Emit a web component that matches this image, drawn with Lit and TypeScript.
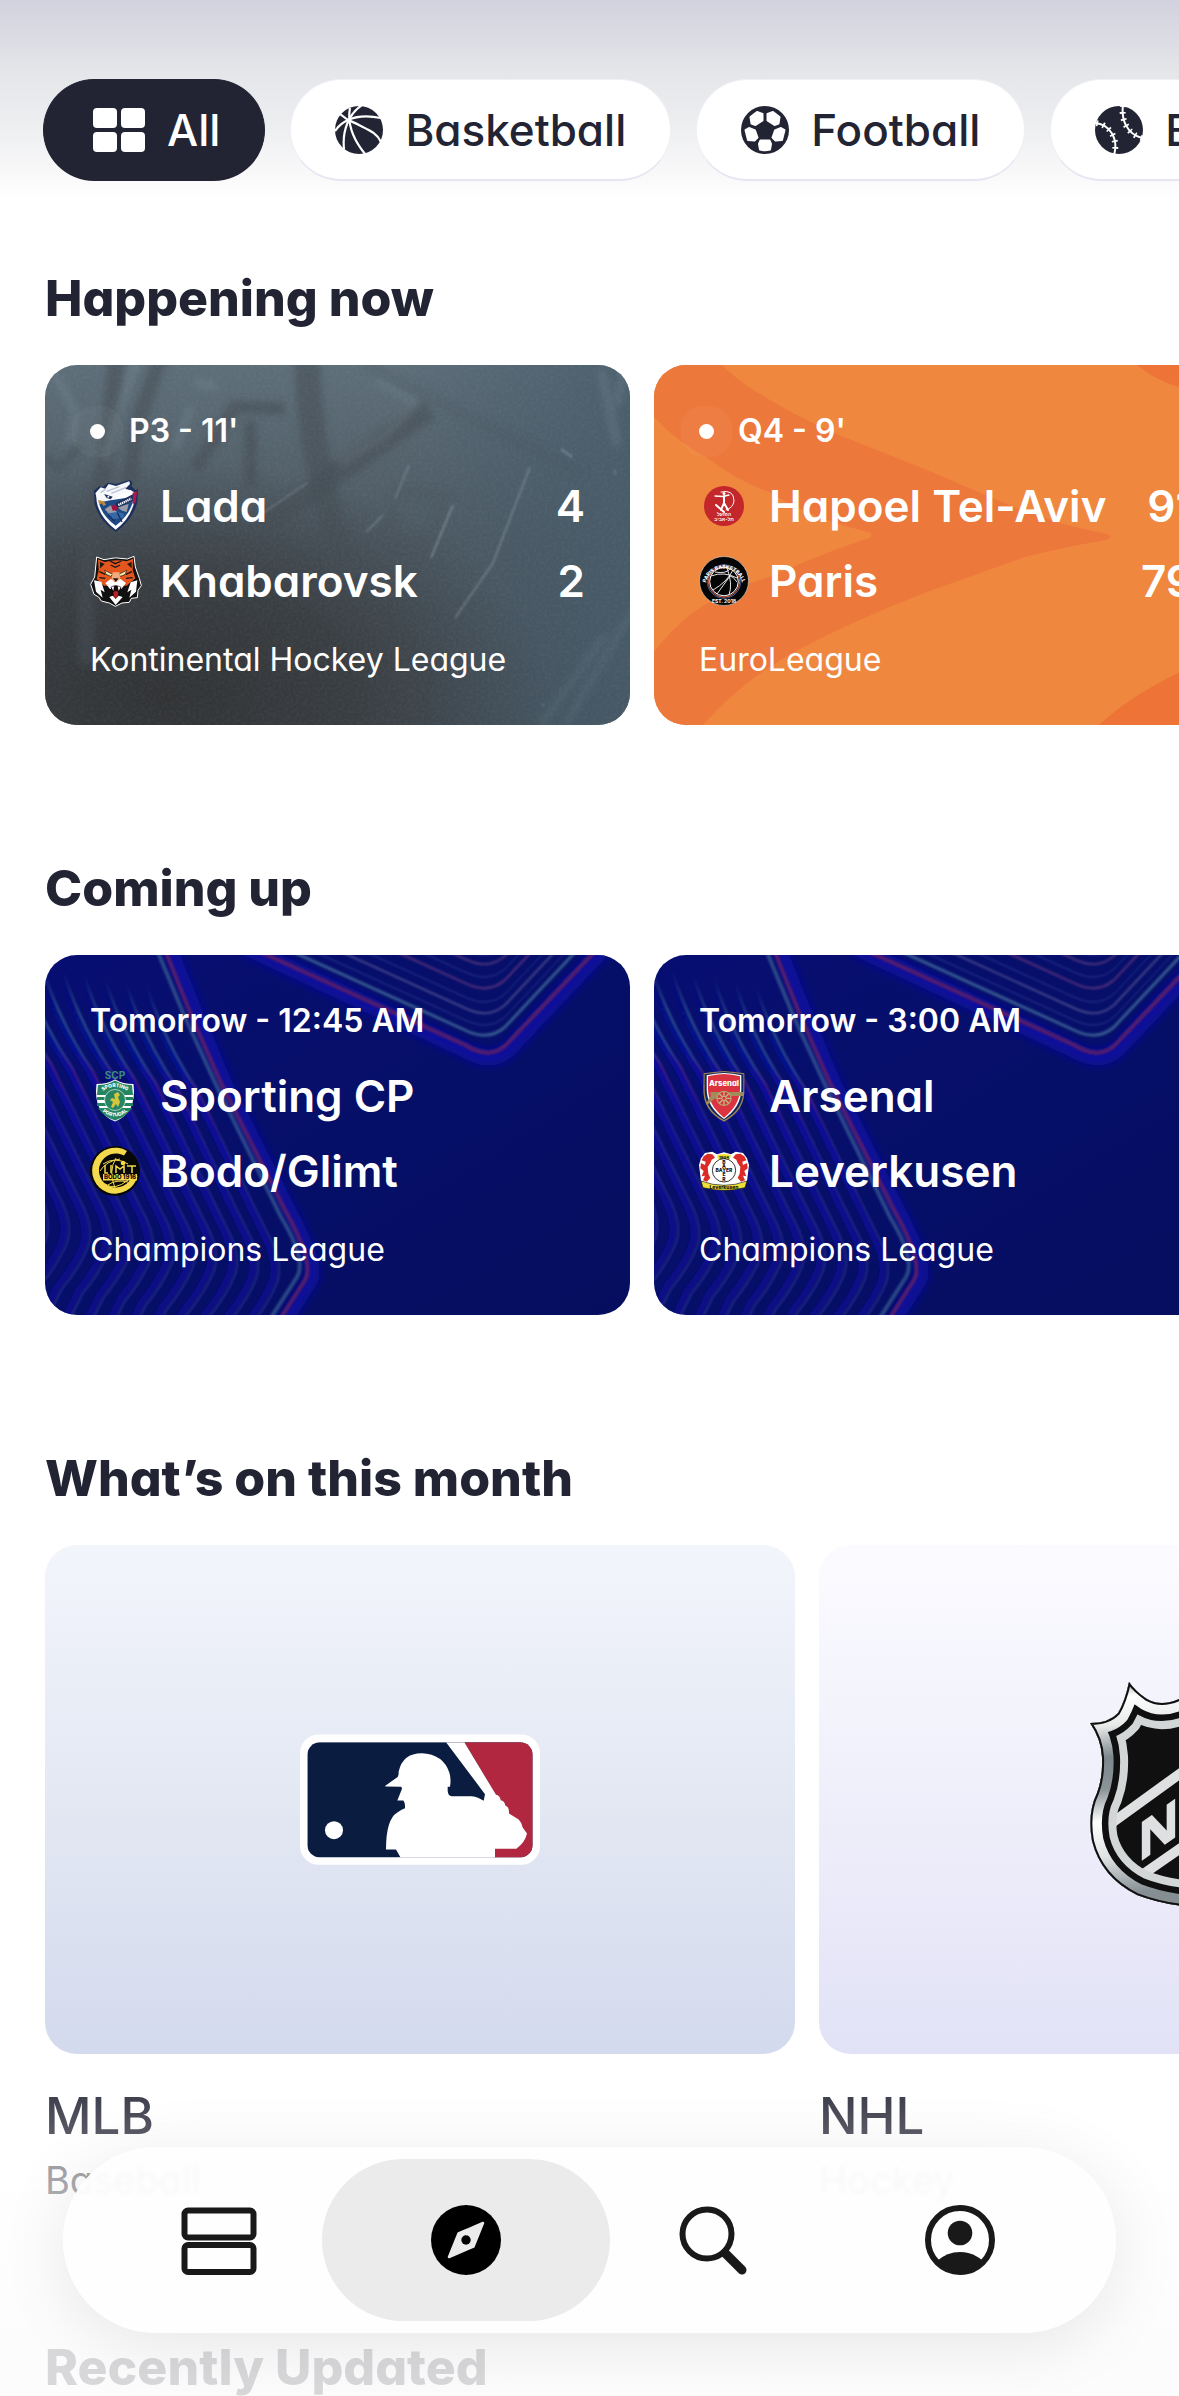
import { LitElement, html, svg, css, nothing, TemplateResult } from "lit";
import { customElement, property, state } from "lit/decorators.js";
import { classMap } from "lit/directives/class-map.js";

/* ---------- sport icons ---------- */

const gridIcon = html`<svg width="52" height="44" viewBox="0 0 52 44" fill="currentColor" aria-hidden="true">
  <rect width="24" height="20" rx="4" /><rect x="28" width="24" height="20" rx="4" />
  <rect y="24" width="24" height="20" rx="4" /><rect x="28" y="24" width="24" height="20" rx="4" />
</svg>`;

const basketballIcon = html`<svg width="48" height="48" viewBox="0 0 48 48" aria-hidden="true">
  <circle cx="24" cy="24" r="24" fill="currentColor" />
  <g fill="none" stroke="#fff" stroke-width="2.2">
    <path d="M0 25C7 15 20 7 46 12" /><path d="M15 2C12 18 17 32 30 48" />
    <path d="M27 -1C14 8 7 24 9 43" /><path d="M5 8C14 16 17 15 24 19C34 24 42 27 46 36" />
  </g>
</svg>`;

const footballIcon = html`<svg width="48" height="48" viewBox="0 0 48 48" aria-hidden="true">
  <circle cx="24" cy="24" r="24" fill="currentColor" />
  <g fill="#fff" stroke="#fff" stroke-width="2" stroke-linejoin="round">
    <path d="M9.500 11L16 6L21.500 8V14.500L14.500 19L10.500 17.500Z" />
    <path d="M38.500 11L32 6L26.500 8V14.500L33.500 19L37.500 17.500Z" />
    <path d="M4.500 24L8 22L14 24.500L16.500 31.500L13.500 34.500L7 34Z" />
    <path d="M43.500 24L40 22L34 24.500L31.500 31.500L34.500 34.500L41 34Z" />
    <path d="M19.500 34.500H28.500L30 38L29 43.500Q24 45 19 43.500L18 38Z" />
  </g>
</svg>`;

const baseballIcon = html`<svg width="48" height="48" viewBox="0 0 48 48" aria-hidden="true">
  <circle cx="24" cy="24" r="24" fill="currentColor" />
  <g fill="none" stroke="#fff">
    <path d="M0 17C14 18 24 32 19 49" stroke-width="2" />
    <path d="M28 -1C26 14 32 28 47 32" stroke-width="2" />
    <path d="M0 17C14 18 24 32 19 49" stroke-width="6" stroke-dasharray="1.700 5" stroke-dashoffset="-8" />
    <path d="M28 -1C26 14 32 28 47 32" stroke-width="6" stroke-dasharray="1.700 5" stroke-dashoffset="-7" />
  </g>
</svg>`;

/* ---------- team crests ---------- */

const lada = html`<svg class="crest" viewBox="30 57 150 150" aria-hidden="true">
  <path d="M42 86L58 72L68 76L84 62L108 66L150 54L158 64L154 72L166 84L174 82L172 120Q160 172 107 210Q56 174 44 126Z" fill="#1d2f5c" />
  <path d="M48 92L150 84L166 92Q164 160 107 203Q58 166 50 118Z" fill="#fff" />
  <path d="M56 120L162 104Q154 156 107 191Q66 162 56 120Z" fill="#1f4a86" />
  <path d="M80 150L104 147L132 155L130 168L94 172Z" fill="#3669a8" />
  <path d="M84 158L104 178M112 152L126 180" stroke="#14305f" stroke-width="4" />
  <path d="M74 142L92 130L110 150L86 154ZM112 136L146 126L140 150L126 146Z" fill="#9a9ca5" />
  <path d="M94 132L112 126L112 144L98 146Z" fill="#a3123f" />
  <path d="M158 92L171 88L167 122L158 126Z" fill="#b2164a" />
  <path d="M106 124L160 96L157 116L112 138Z" fill="#1d2f5c" />
  <path d="M115 129L154 110" stroke="#fff" stroke-width="7" stroke-dasharray="4 2" />
  <path d="M46 94L62 76L76 80L86 66L108 72L148 58L150 66L136 80L156 86L120 98L104 112L92 108L78 118L54 116Z" fill="#f6f8fc" />
  <path d="M62 92L76 82M80 88L118 74M94 94L138 76" stroke="#bac3d3" stroke-width="4" />
  <path d="M72 96L98 104L92 112L80 108Z" fill="#1d2f5c" /><circle cx="85" cy="104" r="3" fill="#fff" />
  <path d="M54 114L72 118L78 128L70 132L66 124L58 128Z" fill="#c08a3e" />
</svg>`;

const khabarovsk = html`<svg class="crest" viewBox="30 283 150 150" aria-hidden="true">
  <path d="M50 286L72 294Q106 284 142 292L162 284L166 316L178 350L184 372L174 386L172 408L154 410L148 422L126 424L106 434L88 424L64 418L56 406L42 398L32 368L44 346Z" fill="#111" stroke="#fff" stroke-width="3" />
  <path d="M54 293L74 301Q106 292 140 299L159 291L158 326L166 350L140 372H72L50 352L56 326Z" fill="#e4561e" />
  <path d="M60 300L74 307L60 320ZM155 300L141 307L155 320Z" fill="#231a16" />
  <path d="M90 298L106 306L124 298M92 310L106 317L120 310M58 330L76 338M156 330L138 338M58 348L76 350M158 348L138 350" stroke="#151515" stroke-width="4" fill="none" />
  <path d="M74 326L98 338L92 344L78 338ZM140 326L116 338L122 344L136 338Z" fill="#f8edb0" stroke="#111" stroke-width="2" />
  <path d="M98 332H118L122 358H94Z" fill="#f0ab7c" />
  <path d="M92 352L106 362L122 352L138 364L124 382H90L76 364Z" fill="#fff" />
  <path d="M98 350H116L108 360Z" fill="#2b1512" />
  <path d="M42 356L64 360L74 392L62 384L68 408L48 390ZM172 356L152 362L142 392L154 384L148 408L168 390Z" fill="#fff" />
  <path d="M92 376Q106 366 124 376L118 408H96Z" fill="#16090a" />
  <path d="M100 392Q107 384 115 392L112 408H102Z" fill="#b82029" />
  <path d="M94 376L100 388L102 374M122 376L116 388L113 374" fill="#fff" />
  <path d="M88 406L98 402L107 412L116 402L128 406L107 430Z" fill="#fff" />
</svg>`;

const hapoel = html`<svg class="crest" viewBox="0 0 50 50" aria-hidden="true">
  <circle cx="25" cy="25" r="20" fill="#c3262b" />
  <g fill="none" stroke="#fff" stroke-linecap="round">
    <path d="M22 11Q35 8 35 20Q34 27 27 29" stroke-width="1" /><path d="M16 15L24 15.500L30 14" stroke-width="1.300" />
    <path d="M25 15V22L29 29M25 22L22 29M17 24L25 31" stroke-width="2" />
  </g>
  <circle cx="25" cy="12.500" r="1.500" fill="#fff" />
  <text x="25" y="35" text-anchor="middle" class="tiny" fill="#fff">הפועל</text>
  <text x="25" y="40" text-anchor="middle" class="tiny" fill="#fff">תל-אביב</text>
</svg>`;

const paris = html`<svg class="crest" viewBox="0 0 50 50" aria-hidden="true">
  <circle cx="25" cy="25" r="24.500" fill="#050505" stroke="#d8d8d8" stroke-width=".6" />
  <circle cx="25" cy="25.500" r="16.800" fill="none" stroke="#39558e" stroke-width="1" />
  <circle cx="25" cy="25.500" r="15.700" fill="none" stroke="#de6450" stroke-width="1" />
  <circle cx="25" cy="25.500" r="14.300" fill="#050505" stroke="#fff" stroke-width="1" />
  <g fill="none" stroke="#fff" stroke-width=".9">
    <path d="M12 20Q25 15 38 22M14 34Q28 26 34 14M18 38L31 20M30 39Q34 28 28 12M16 16Q27 18 31 13M38 26Q34 20 31 20" />
  </g>
  <path id="paris-top" d="M6.500 28A18.800 18.800 0 0 1 43.500 28" fill="none" />
  <text class="ring" fill="#fff"><textPath href="#paris-top" startOffset="50%" text-anchor="middle">PARIS BASKETBALL</textPath></text>
  <text x="25" y="47" text-anchor="middle" class="tiny" fill="#fff">EST. 2018</text>
</svg>`;

const sporting = html`<svg class="crest" viewBox="0 0 50 50" aria-hidden="true">
  <text x="25" y="8" text-anchor="middle" class="scp" fill="#3a8f79">SCP</text>
  <path d="M6.500 13Q17 13 25 8.500Q33 13 43.500 13Q47 42 25 50.500Q3 42 6.500 13Z" fill="#fff" />
  <path d="M8 14Q17 14 25 9.500Q33 14 42 14L43 24H7ZM8 37H42Q36 46 25 49.500Q14 46 8 37Z" fill="#258560" />
  <path d="M7 26H43V29H7ZM7 32H43V35H7Z" fill="#258560" />
  <circle cx="25" cy="29" r="10.500" fill="#258560" stroke="#fff" stroke-width=".6" />
  <path d="M21 36L23 31L20 29L22 27L25 28L24 23L28 21L30 24L28 26L30 31L28 36L26 33L23 37Z" fill="#d6c63c" />
  <path id="scp-top" d="M10 22Q25 10 40 22" fill="none" /><path id="scp-low" d="M10 38Q25 53 40 38" fill="none" />
  <text class="ring" fill="#fff"><textPath href="#scp-top" startOffset="50%" text-anchor="middle">SPORTING</textPath></text>
  <text class="ring" fill="#fff"><textPath href="#scp-low" startOffset="50%" text-anchor="middle">PORTUGAL</textPath></text>
</svg>`;

const bodo = html`<svg class="crest" viewBox="0 0 50 50" aria-hidden="true">
  <circle cx="25" cy="25" r="25" fill="#080806" />
  <path d="M37 5A23 23 0 1 0 47.500 30L42 30A17 17 0 1 1 34 9.500Z" fill="#f4d94c" />
  <g fill="none" stroke="#f4d94c" stroke-width="1">
    <path d="M13 18Q25 10 38 18M10 25Q16 15 30 13M15 38Q25 45 38 34M18 39Q26 33 38 36M26 12Q18 25 25 42" />
  </g>
  <path d="M15 19V27H18M21 19V27M26 27V20L30 23L34 20V27M37 20H46M42 20V27" fill="none" stroke="#f4d94c" stroke-width="1.500" />
  <circle cx="33" cy="17" r="2.300" fill="#f4d94c" />
  <rect x="13" y="28" width="34" height="6.500" fill="#f4d94c" />
  <text x="30" y="33.200" text-anchor="middle" class="bodo" fill="#080806">BODO 1916</text>
</svg>`;

const arsenal = html`<svg class="crest" viewBox="58 57 150 150" aria-hidden="true">
  <path d="M72 64Q102 60 133 57Q164 60 194 64V108Q198 176 133 209Q68 176 71 108Z" fill="#9c8453" />
  <path d="M75 67Q104 63 133 60Q162 63 191 67V110Q192 172 133 204Q74 172 75 110Z" fill="#10275f" />
  <path d="M81 70Q106 64 133 63Q160 64 185 70V112Q184 166 133 201Q82 166 81 112Z" fill="#fff" />
  <path d="M85 73Q106 67 133 66Q160 67 181 73V112Q180 160 133 197Q86 160 85 112Z" fill="#dc3340" />
  <path d="M92 120H192V132H156L150 140H104L82 160L80 152L94 132Z" fill="#a38c5b" />
  <circle cx="133" cy="139" r="21" fill="#cf3a40" stroke="#b89f6a" stroke-width="4" />
  <path d="M133 119V160M113 139H153M119 125L147 154M147 125L119 154" stroke="#c9b37f" stroke-width="4" />
  <circle cx="133" cy="139" r="6" fill="#df2b38" stroke="#c9b37f" stroke-width="3" />
  <text x="133" y="103" text-anchor="middle" class="arsenal" fill="#fff">Arsenal</text>
</svg>`;

const leverkusen = html`<svg class="crest" viewBox="58 283 150 150" aria-hidden="true">
  <path d="M76 304L98 300L112 308L133 302L154 308L168 300L190 304L202 320L208 340L202 388L188 406Q133 424 78 406L64 388L58 340L64 320Z" fill="#fff" />
  <g fill="#dc2b27">
    <path d="M72 314L84 306L98 308L106 318L96 324L92 334L84 346L86 366L92 378L82 390L70 386L76 372L66 374L72 358L62 350L64 334L76 340L78 330L66 326Z" />
    <path d="M194 314L182 306L168 308L160 318L170 324L174 334L182 346L180 366L174 378L184 390L196 386L190 372L200 374L194 358L204 350L202 334L190 340L188 330L200 326Z" />
  </g>
  <path d="M112 310Q133 304 154 310L150 324Q133 318 116 324Z" fill="#f2df35" />
  <circle cx="133" cy="356" r="35" fill="#fff" stroke="#111" stroke-width="2.500" />
  <path d="M64 388Q133 414 202 388L196 408Q133 424 70 408Z" fill="#f2df35" stroke="#111" stroke-width="2" />
  <text x="133" y="321" text-anchor="middle" class="lev-small" fill="#111">1904</text>
  <text x="133" y="362" text-anchor="middle" class="lev" fill="#111">BAYER</text>
  <text x="133" y="337" text-anchor="middle" class="lev" fill="#111">B</text>
  <text x="133" y="349" text-anchor="middle" class="lev" fill="#111">A</text>
  <text x="133" y="374" text-anchor="middle" class="lev" fill="#111">E</text>
  <text x="133" y="387" text-anchor="middle" class="lev" fill="#111">R</text>
  <text x="133" y="411" text-anchor="middle" class="lev" fill="#111">Leverkusen</text>
</svg>`;

/* ---------- card artwork ---------- */

const iceArt = html`<svg class="art" viewBox="0 0 585 360" preserveAspectRatio="xMidYMid slice" aria-hidden="true">
  <defs>
    <linearGradient id="ice" x1="0" y1="0" x2="0" y2="1"><stop offset="0" stop-color="#5e6e79" /><stop offset=".5" stop-color="#4c5861" /><stop offset="1" stop-color="#434e57" /></linearGradient>
    <radialGradient id="dark" cx=".2" cy=".92" r=".66"><stop offset="0" stop-color="#313335" /><stop offset=".5" stop-color="#36393c" stop-opacity=".8" /><stop offset="1" stop-color="#3a4046" stop-opacity="0" /></radialGradient>
    <linearGradient id="side" x1="0" x2="1"><stop offset=".6" stop-color="#465b6a" stop-opacity="0" /><stop offset="1" stop-color="#465b6a" stop-opacity=".8" /></linearGradient>
    <filter id="b3" x="-20%" y="-20%" width="140%" height="140%"><feGaussianBlur stdDeviation="3.500" /></filter>
    <filter id="b1"><feGaussianBlur stdDeviation=".8" /></filter>
    <filter id="grain"><feTurbulence type="fractalNoise" baseFrequency=".35" numOctaves="2" seed="4" /><feColorMatrix values="0 0 0 0 1  0 0 0 0 1  0 0 0 0 1  .5 0 0 0 -.18" /></filter>
  </defs>
  <rect width="585" height="360" fill="url(#ice)" />
  <rect width="585" height="360" fill="url(#side)" />
  <rect width="585" height="360" fill="url(#dark)" />
  <g filter="url(#b3)" fill="none" stroke="#434c53" stroke-opacity=".55">
    <path d="M262 -10Q264 60 276 110L298 210" stroke-width="26" />
    <path d="M384 44L290 110L215 164" stroke-width="22" />
    <path d="M116 -10L92 60L84 118" stroke-width="15" />
    <path d="M72 -10L60 100Q36 180 42 300" stroke-width="17" />
    <path d="M150 104L190 42L240 44M205 56L206 122" stroke-width="13" />
    <path d="M0 92L14 104L36 80" stroke-width="7" />
    <path d="M350 180L384 176L402 130L352 126L344 170" stroke-width="9" stroke-opacity=".25" />
    <path d="M320 0L540 110" stroke-width="12" stroke-opacity=".2" />
  </g>
  <g filter="url(#b3)" fill="none" stroke="#8294a0" stroke-opacity=".3">
    <path d="M92 -6L72 50L60 96M10 10L30 46L24 80M146 42L130 84M150 18L172 22" stroke-width="7" />
    <path d="M330 15L372 38L340 70L296 98" stroke-width="6" stroke-opacity=".25" />
    <path d="M556 4L572 80M580 0L572 40" stroke-width="8" stroke-opacity=".25" />
    <path d="M585 250L520 360M560 270L496 360" stroke-width="5" stroke-opacity=".2" />
  </g>
  <g filter="url(#b1)" fill="none" stroke="#9fb0ba" stroke-opacity=".5" stroke-width="1.800">
    <path d="M364 100L350 134M338 150L321 167" stroke-opacity=".35" /><path d="M408 140L386 193" />
    <path d="M485 102L448 198L410 253" stroke-opacity=".4" /><path d="M516 84L527 92" />
    <path d="M212 152L262 118M570 104V110M498 338V342" stroke-opacity=".3" />
  </g>
  <rect width="585" height="360" filter="url(#grain)" opacity=".18" />
</svg>`;

const orangeArt = html`<svg class="art" viewBox="0 0 585 360" preserveAspectRatio="xMidYMid slice" aria-hidden="true">
  <rect width="585" height="360" fill="#ef873e" />
  <path d="M0 0H68Q80 12 95 22Q135 48 185 70L273 105L343 135Q395 158 453 169Q460 172 452 175Q410 182 371 192L273 227Q200 255 140 287Q85 318 49 360H0V287Q16 266 38 248Q72 224 115 212Q180 184 215 173Q220 170 215 167Q160 155 115 127Q84 116 56 95Q22 76 0 52Z" fill="#ed783b" />
  <path d="M483 0Q500 14 524 22L585 44V0Z" fill="#ed7336" />
  <path d="M445 360Q475 332 524 308L585 282V360Z" fill="#ed7336" />
</svg>`;

const stripes = [...Array(14).keys()].map((i) => i + 1);
const chevrons = [
  { dy: 12, w: 3, c: "#36588f" }, { dy: 22, w: 1, c: "#2c3a90" }, { dy: 34, w: 2, c: "#434488" },
  { dy: 45, w: 1, c: "#2c3a90" }, { dy: 59, w: 2.4, c: "#4a2c78" }, { dy: 70, w: 1, c: "#2c3a90" },
  { dy: 83, w: 2, c: "#483278" }, { dy: 92, w: 1, c: "#2c3a90" },
];

const starArt = html`<svg class="art" viewBox="0 0 585 360" preserveAspectRatio="xMidYMid slice" aria-hidden="true">
  <defs>
    <linearGradient id="night" x1="0" y1="0" x2="1" y2="1"><stop offset="0" stop-color="#070e72" /><stop offset=".5" stop-color="#060f68" /><stop offset="1" stop-color="#050e5e" /></linearGradient>
    <linearGradient id="line" gradientUnits="userSpaceOnUse" x1="0" y1="0" x2="0" y2="360">
      <stop offset=".1" stop-color="#3f7398" stop-opacity="0" /><stop offset=".22" stop-color="#3f7398" stop-opacity=".8" /><stop offset=".34" stop-color="#31508f" /><stop offset=".4" stop-color="#501e78" /><stop offset=".52" stop-color="#26248a" /><stop offset="1" stop-color="#232f90" />
    </linearGradient>
    <linearGradient id="band" gradientUnits="userSpaceOnUse" x1="0" y1="0" x2="0" y2="360"><stop offset=".12" stop-color="#0a12a0" stop-opacity="0" /><stop offset=".4" stop-color="#08109a" /><stop offset="1" stop-color="#081088" /></linearGradient>
    <filter id="s4" x="-20%" y="-20%" width="140%" height="140%"><feGaussianBlur stdDeviation="4.500" /></filter>
    <filter id="s1" x="-20%" y="-20%" width="140%" height="140%"><feGaussianBlur stdDeviation="1" /></filter>
  </defs>
  <rect width="585" height="360" fill="url(#night)" />
  <g fill="none" filter="url(#s1)">
    ${stripes.map((i) => svg`<g transform=${`translate(${-21 * i} ${-4 * i})`}>
      <path d="M105 -20Q122 70 170 140L240 285Q254 312 248 330Q240 350 222 372L190 440" stroke="url(#band)" stroke-width="6" />
      <path d="M109 -20Q126 70 174 140L245 285Q260 312 253 332Q245 352 227 374L194 440" stroke="url(#line)" stroke-width="1.600" />
    </g>`)}
  </g>
  <g fill="none">
    <path d="M124 -10L152 60L180 128L244 255Q274 312 266 325L238 370" stroke="#0810a8" stroke-opacity=".85" stroke-width="14" filter="url(#s4)" />
    <g filter="url(#s1)">
      <path d="M110 -10L139 60L172 132L236 262Q262 305 252 322L220 372" stroke="#2b4886" stroke-width="4" />
      <path d="M118 -10L146 60L176 128L240 255Q270 308 260 325L230 372" stroke="#541f6c" stroke-width="4" />
    </g>
  </g>
  <g fill="none">
    <path d="M200 -8L420 95Q446 110 464 94L562 -10" stroke="#0810a8" stroke-opacity=".85" stroke-width="16" filter="url(#s4)" />
    <g filter="url(#s1)">
      <path d="M200 -10L420 90Q446 106 462 89L556 -10" stroke="#541f6c" stroke-width="4" />
      ${chevrons.map(({ dy, w, c }) => svg`<path transform=${`translate(0 ${-dy})`} d="M160 -31L422 88Q444 98 460 84L580 -44" stroke=${c} stroke-width=${w} />`)}
    </g>
  </g>
</svg>`;

/* ---------- league logos ---------- */

const mlbLogo = html`<svg width="240" height="131" viewBox="60 70 720 392" role="img" aria-label="MLB">
  <defs><clipPath id="mlb"><rect x="82" y="94" width="676" height="346" rx="38" /></clipPath></defs>
  <rect x="60" y="71" width="720" height="391" rx="56" fill="#fff" />
  <g clip-path="url(#mlb)">
    <rect x="82" y="94" width="676" height="346" fill="#0a1d40" />
    <path d="M553 94H758V440H640V240Z" fill="#b0273f" />
    <path d="M316 225L352 199Q356 196 356 182Q368 127 425 127Q490 130 508 185Q514 205 510 228H503V240Q504 256 515 256H575Q595 258 611 270L615 250L498 94H553L648 252Q660 254 662 268Q674 270 676 284Q688 288 687 308L716 326Q726 336 728 350L741 368Q735 395 709 414H645V441H362L348 416H318Q318 325 352 305Q366 295 375 292Q376 275 370 269H352L366 234L364 228L316 227Z" fill="#fff" />
    <circle cx="162" cy="358" r="27" fill="#fff" />
  </g>
</svg>`;

const shield = "M105 1Q98 16 90 18Q72 26 58 18Q46 10 40 1Q36 20 29 32Q20 42 1 42Q12 58 13 76Q14 96 8 112Q-2 132 3 160Q12 196 48 214Q74 224 105 226Q136 224 162 214Q198 196 207 160Q212 132 202 112Q196 96 197 76Q198 58 209 42Q190 42 181 32Q174 20 170 1Q164 10 152 18Q138 26 120 18Q112 16 105 1Z";

const nhlLogo = html`<svg width="210" height="238" viewBox="0 0 210 238" role="img" aria-label="NHL">
  <defs>
    <clipPath id="nhl"><path d=${shield} /></clipPath>
    <linearGradient id="steel" x1="0" y1="0" x2=".1" y2="1"><stop offset="0" stop-color="#8f979b" /><stop offset=".08" stop-color="#fff" /><stop offset=".2" stop-color="#e8eaea" /><stop offset=".34" stop-color="#7d878c" /><stop offset=".48" stop-color="#8b9498" /><stop offset=".62" stop-color="#fff" /><stop offset=".78" stop-color="#dfe2e3" /><stop offset=".95" stop-color="#858e92" /></linearGradient>
  </defs>
  <g clip-path="url(#nhl)">
    <path d=${shield} fill="#101010" />
    <path d="M20 144L190 21M50 196L200 92" stroke="#dfe0e1" stroke-width="10" />
    <g fill="none">
      <path d=${shield} stroke="#d3d6d7" stroke-width="52" />
      <path d=${shield} stroke="#101010" stroke-width="36" />
      <path d=${shield} stroke="url(#steel)" stroke-width="23" />
      <path d=${shield} stroke="#101010" stroke-width="4" />
    </g>
    <text transform="translate(50 181) skewY(-35)" class="nhl" fill="#dfe0e1" stroke="#dfe0e1" stroke-width="1.500">NHL</text>
  </g>
</svg>`;

/* ---------- tab bar icons ---------- */

const feedIcon = html`<svg width="80" height="80" viewBox="0 0 80 80" fill="none" stroke="#191919" stroke-width="6" aria-hidden="true">
  <rect x="5.500" y="10.500" width="69" height="27" rx="3.500" /><rect x="5.500" y="45" width="69" height="27" rx="3.500" />
</svg>`;
const compassIcon = html`<svg width="80" height="80" viewBox="0 0 80 80" aria-hidden="true">
  <circle cx="40" cy="40" r="35" fill="#000" />
  <path d="M57 23L47.500 46.500L23 57L32.500 33.500Z" fill="#ebebeb" stroke="#ebebeb" stroke-width="2.500" stroke-linejoin="round" />
  <circle cx="40" cy="40" r="4.700" fill="#000" />
</svg>`;
const searchIcon = html`<svg width="80" height="80" viewBox="0 0 80 80" fill="none" stroke="#191919" aria-hidden="true">
  <circle cx="34" cy="34" r="24.500" stroke-width="6" /><path d="M52 53L69 70" stroke-width="9" stroke-linecap="round" />
</svg>`;
const profileIcon = html`<svg width="80" height="80" viewBox="0 0 80 80" aria-hidden="true">
  <circle cx="40" cy="40" r="32" fill="none" stroke="#191919" stroke-width="6" />
  <circle cx="40" cy="33" r="12.300" fill="#191919" />
  <path d="M17 61Q27 52 40 52T63 61A32 32 0 0 1 17 61Z" fill="#191919" />
</svg>`;

/* ---------- data ---------- */

interface Team { name: string; crest: TemplateResult; score?: number }
interface Match { status: string; live?: boolean; league: string; art: TemplateResult; teams: Team[] }
interface League { name: string; sport: string; tone: string; logo: TemplateResult }

const sports = [
  { name: "All", icon: gridIcon },
  { name: "Basketball", icon: basketballIcon },
  { name: "Football", icon: footballIcon },
  { name: "Baseball", icon: baseballIcon },
];

const liveMatches: Match[] = [
  { status: "P3 - 11'", live: true, league: "Kontinental Hockey League", art: iceArt,
    teams: [{ name: "Lada", crest: lada, score: 4 }, { name: "Khabarovsk", crest: khabarovsk, score: 2 }] },
  { status: "Q4 - 9'", live: true, league: "EuroLeague", art: orangeArt,
    teams: [{ name: "Hapoel Tel-Aviv", crest: hapoel, score: 91 }, { name: "Paris", crest: paris, score: 79 }] },
];

const nextMatches: Match[] = [
  { status: "Tomorrow - 12:45 AM", league: "Champions League", art: starArt,
    teams: [{ name: "Sporting CP", crest: sporting }, { name: "Bodo/Glimt", crest: bodo }] },
  { status: "Tomorrow - 3:00 AM", league: "Champions League", art: starArt,
    teams: [{ name: "Arsenal", crest: arsenal }, { name: "Leverkusen", crest: leverkusen }] },
];

const leagues: League[] = [
  { name: "MLB", sport: "Baseball", tone: "blue", logo: mlbLogo },
  { name: "NHL", sport: "Hockey", tone: "violet", logo: nhlLogo },
];

const tabs = [
  { name: "Feed", icon: feedIcon },
  { name: "Discover", icon: compassIcon },
  { name: "Search", icon: searchIcon },
  { name: "Profile", icon: profileIcon },
];

/* ---------- elements ---------- */

@customElement("match-card")
class MatchCard extends LitElement {
  @property({ attribute: false }) match!: Match;

  static styles = css`
    :host { display: block; flex: 0 0 585px; }
    .card { position: relative; isolation: isolate; display: flex; flex-direction: column; padding: 45px; border-radius: 32px; overflow: hidden; color: #fff; text-decoration: none; }
    .art { position: absolute; inset: 0; width: 100%; height: 100%; z-index: -1; }
    .status { display: flex; align-items: center; gap: 24px; margin-bottom: 16px; font-size: 32px; line-height: 42px; font-weight: 600; }
    .dot { width: 15px; height: 15px; border-radius: 50%; background: #fff; box-shadow: 0 0 0 18px rgba(255, 255, 255, 0.04); }
    .team { display: flex; align-items: center; gap: 20px; height: 75px; font-size: 44px; line-height: 52px; font-weight: 600; white-space: nowrap; }
    .crest { flex: none; width: 50px; height: 50px; overflow: visible; }
    .name { flex: 1; }
    .league { margin-top: 22px; font-size: 32px; line-height: 40px; }
    .tiny { font-size: 5px; font-weight: 700; }
    .ring { font-size: 5px; font-weight: 800; }
    .scp { font-size: 10px; font-weight: 700; }
    .bodo { font-size: 6px; font-weight: 800; }
    .arsenal { font-size: 23px; font-weight: 800; }
    .lev { font-size: 15px; font-weight: 800; }
    .lev-small { font-size: 12px; font-weight: 800; }
  `;

  render() {
    const m = this.match;
    return html`<a class="card" href="#match">
      ${m.art}
      <div class="status">${m.live ? html`<span class="dot"></span>` : nothing}<span>${m.status}</span></div>
      ${m.teams.map((t) => html`<div class="team">${t.crest}<span class="name">${t.name}</span>${t.score === undefined ? nothing : html`<span>${t.score}</span>`}</div>`)}
      <div class="league">${m.league}</div>
    </a>`;
  }
}

@customElement("league-card")
class LeagueCard extends LitElement {
  @property({ attribute: false }) league!: League;

  static styles = css`
    :host { display: block; flex: 0 0 750px; }
    .card { display: block; color: #232433; text-decoration: none; }
    .cover { display: grid; place-items: center; height: 509px; border-radius: 32px; }
    .blue { background: linear-gradient(#f3f5fc, #e3e8f3 50%, #d3daed); }
    .violet { background: linear-gradient(#fbfbff, #efeffb 50%, #e2e2f7); }
    .name { margin: 32px 0 0; font-size: 51px; line-height: 60px; font-weight: 500; }
    .sport { margin: 10px 0 0; font-size: 38px; line-height: 48px; color: #6c6d76; }
    .nhl { font-family: "Liberation Sans", sans-serif; font-size: 54px; font-weight: 700; }
  `;

  render() {
    const l = this.league;
    return html`<a class="card" href="#league">
      <div class=${classMap({ cover: true, [l.tone]: true })}>${l.logo}</div>
      <div class="name">${l.name}</div>
      <div class="sport">${l.sport}</div>
    </a>`;
  }
}

@customElement("app-root")
class AppRoot extends LitElement {
  @state() private sport = "All";
  @state() private tab = "Discover";

  static styles = css`
    :host { display: block; position: relative; height: 100vh; overflow: hidden; background: #fff; color: #232433; font-family: Inter, "Noto Sans", sans-serif; font-feature-settings: "cv11"; }
    * { box-sizing: border-box; }
    button { font: inherit; font-feature-settings: inherit; color: inherit; border: 0; cursor: pointer; }
    .top { padding: 79px 0 20px 43px; background: linear-gradient(#d2d2df, #dcdce4 20%, #e5e6e9 36%, #edeef0 62%, #f8f8f9 85%, #fff); overflow: hidden; }
    .chips { display: flex; gap: 25px; }
    .chip { flex: none; display: flex; align-items: center; gap: 22px; height: 102px; padding: 0 44px; border-radius: 51px; background: #fff; border: 1px solid #efeff5; border-bottom: 2px solid #e7e5f1; font-size: 44px; font-weight: 500; }
    .chip.on { padding: 0 44px 0 49px; background: #232433; border-color: #232433; color: #fff; }
    .feed { display: flex; flex-direction: column; gap: 133px; padding: 67px 0 0 45px; }
    .title { margin: 0 0 37px; font-size: 50px; line-height: 60px; font-weight: 800; }
    .row { display: flex; gap: 24px; }
    .fade { position: fixed; inset: auto 0 0; height: 340px; background: linear-gradient(rgba(255, 255, 255, 0), rgba(254, 254, 254, 0.42) 38%, rgba(252, 252, 252, 0.84) 85%, rgba(252, 252, 252, 0.84)); pointer-events: none; }
    .tabs { position: fixed; inset: auto 63px 63px; display: grid; grid-template-columns: repeat(4, 1fr); padding: 12px 32px; border-radius: 93px; background: rgba(254, 254, 254, 0.93); backdrop-filter: blur(2px); box-shadow: 0 12px 70px rgba(0, 0, 0, 0.09); }
    .tab { display: grid; place-items: center; height: 162px; margin: 0 -20px; padding: 0; border-radius: 81px; background: none; }
    .tab.on { background: #ebebeb; }
  `;

  private section(title: string, cards: unknown) {
    return html`<section><h2 class="title">${title}</h2><div class="row">${cards}</div></section>`;
  }

  render() {
    return html`
      <header class="top"><div class="chips">
        ${sports.map((s) => html`<button class=${classMap({ chip: true, on: s.name === this.sport })} aria-pressed=${s.name === this.sport} @click=${() => (this.sport = s.name)}>${s.icon}<span>${s.name}</span></button>`)}
      </div></header>
      <main class="feed">
        ${this.section("Happening now", liveMatches.map((m) => html`<match-card .match=${m}></match-card>`))}
        ${this.section("Coming up", nextMatches.map((m) => html`<match-card .match=${m}></match-card>`))}
        ${this.section("What’s on this month", leagues.map((l) => html`<league-card .league=${l}></league-card>`))}
        ${this.section("Recently Updated", nothing)}
      </main>
      <div class="fade"></div>
      <nav class="tabs">
        ${tabs.map((t) => html`<button class=${classMap({ tab: true, on: t.name === this.tab })} aria-label=${t.name} @click=${() => (this.tab = t.name)}>${t.icon}</button>`)}
      </nav>
    `;
  }
}
